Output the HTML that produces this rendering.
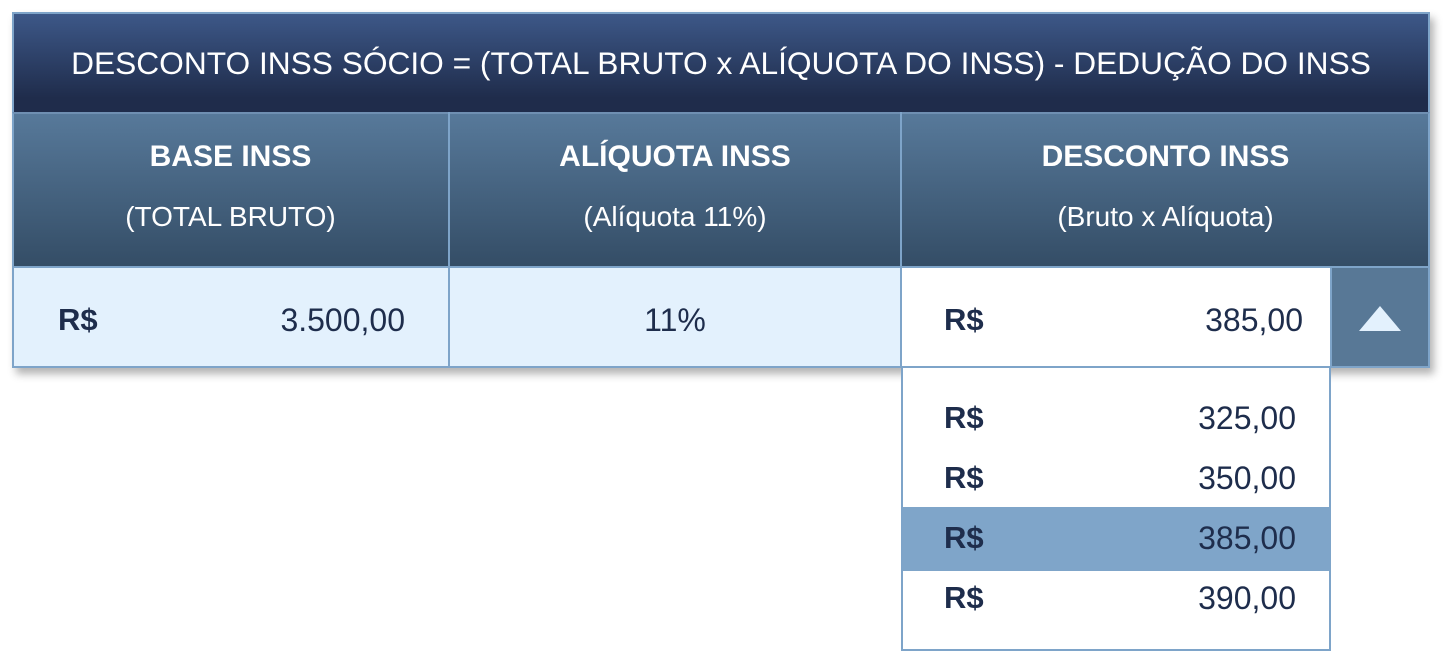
<!DOCTYPE html>
<html><head><meta charset="utf-8"><style>
body{margin:0;width:1456px;height:652px;background:#fff;position:relative;font-family:"Liberation Sans",sans-serif;overflow:hidden}
.a{position:absolute;box-sizing:border-box}
.t{display:flex;align-items:center;justify-content:center}
</style></head><body>
<div class="a" style="left:12px;top:12px;width:1418px;height:356px;box-shadow:4px 6px 8px rgba(0,0,0,.3);background:#e3f1fd"></div>
<div class="a t" style="left:12px;top:12px;width:1418px;height:101px;background:linear-gradient(#3d5888,#1f2c4b 85%);border:2px solid #7ea4c9;border-bottom:none;color:#fff;font-size:31.7px">DESCONTO INSS SÓCIO = (TOTAL BRUTO x ALÍQUOTA DO INSS) - DEDUÇÃO DO INSS</div>
<div class="a" style="left:12px;top:112px;width:1418px;height:156px;background:linear-gradient(#57799a,#344d66);border:2px solid #7ea4c9;border-top:2px solid #6f8fb2"></div>
<div class="a" style="left:448px;top:112px;width:2px;height:256px;background:#7ea4c9"></div>
<div class="a" style="left:900px;top:112px;width:2px;height:256px;background:#7ea4c9"></div>
<div class="a" style="left:12px;top:140px;width:437px;text-align:center;color:#fff;font-size:30px;font-weight:bold">BASE INSS</div>
<div class="a" style="left:12px;top:201px;width:437px;text-align:center;color:#fff;font-size:28px">(TOTAL BRUTO)</div>
<div class="a" style="left:449px;top:140px;width:452px;text-align:center;color:#fff;font-size:30px;font-weight:bold">ALÍQUOTA INSS</div>
<div class="a" style="left:449px;top:201px;width:452px;text-align:center;color:#fff;font-size:28px">(Alíquota 11%)</div>
<div class="a" style="left:901px;top:140px;width:529px;text-align:center;color:#fff;font-size:30px;font-weight:bold">DESCONTO INSS</div>
<div class="a" style="left:901px;top:201px;width:529px;text-align:center;color:#fff;font-size:28px">(Bruto x Alíquota)</div>
<div class="a" style="left:12px;top:267px;width:1418px;height:101px;border:2px solid #7ea4c9;border-top:none"></div>
<div class="a" style="left:58px;top:302px;font-size:31px;font-weight:bold;color:#1e2d4c">R$</div>
<div class="a" style="left:200px;top:302px;width:205px;text-align:right;font-size:32px;color:#1e2d4c">3.500,00</div>
<div class="a" style="left:449px;top:302px;width:452px;text-align:center;font-size:32px;color:#1e2d4c">11%</div>
<div class="a" style="left:902px;top:268px;width:428px;height:98px;background:#fff"></div>
<div class="a" style="left:944px;top:302px;font-size:31px;font-weight:bold;color:#1e2d4c">R$</div>
<div class="a" style="left:1100px;top:302px;width:203px;text-align:right;font-size:32px;color:#1e2d4c">385,00</div>
<div class="a" style="left:1330px;top:268px;width:100px;height:100px;background:#587896;border:2px solid #7ea4c9;border-top:none"></div>
<div class="a" style="left:1359px;top:306px;width:0;height:0;border-left:21px solid transparent;border-right:21px solid transparent;border-bottom:25px solid #e3f1fd"></div>
<div class="a" style="left:901px;top:366px;width:430px;height:285px;background:#fff;border:2px solid #7ea4c9"></div>
<div class="a" style="left:903px;top:507px;width:428px;height:64px;background:#7fa5c9"></div>
<div class="a" style="left:944px;top:388px;font-size:31px;font-weight:bold;color:#1e2d4c;line-height:60px">R$<br>R$<br>R$<br>R$</div>
<div class="a" style="left:1100px;top:388px;width:196px;text-align:right;font-size:32px;color:#1e2d4c;line-height:60px">325,00<br>350,00<br>385,00<br>390,00</div>
</body></html>
